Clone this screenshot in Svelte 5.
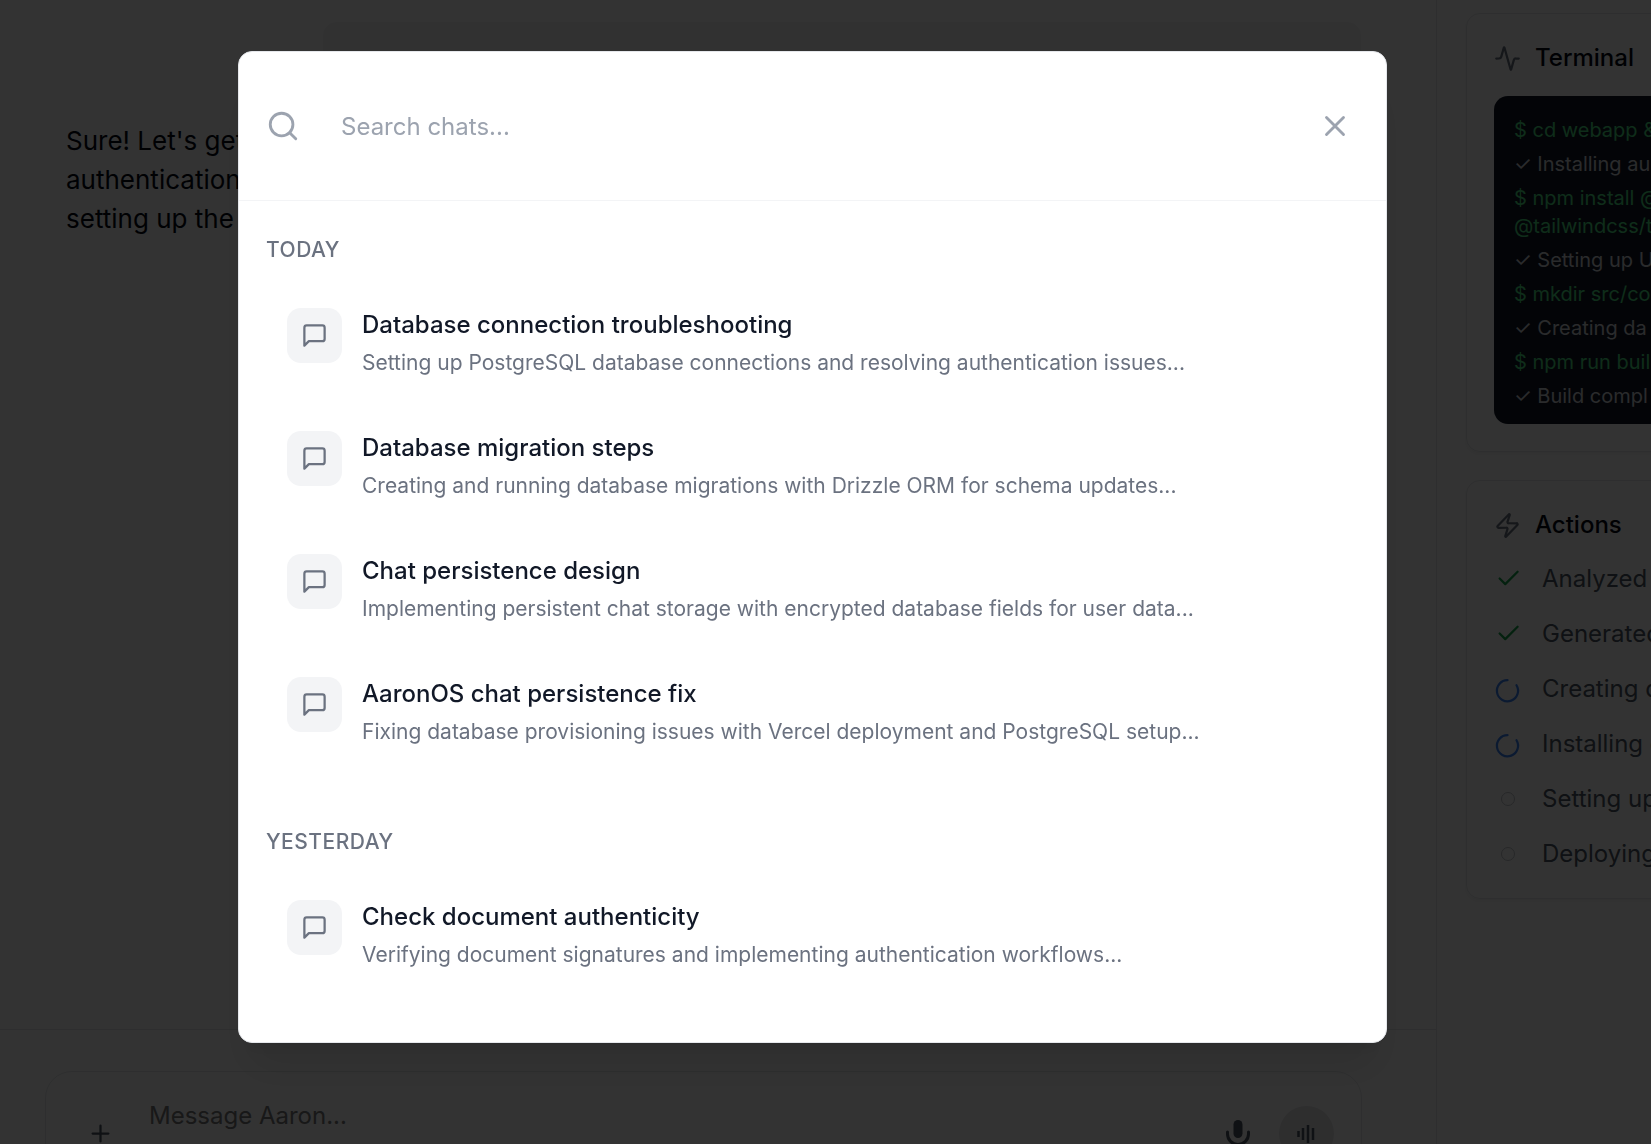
<script>
  const groups = [
    {
      label: 'TODAY',
      chats: [
        { title: 'Database connection troubleshooting', summary: 'Setting up PostgreSQL database connections and resolving authentication issues...' },
        { title: 'Database migration steps', summary: 'Creating and running database migrations with Drizzle ORM for schema updates...' },
        { title: 'Chat persistence design', summary: 'Implementing persistent chat storage with encrypted database fields for user data...' },
        { title: 'AaronOS chat persistence fix', summary: 'Fixing database provisioning issues with Vercel deployment and PostgreSQL setup...' }
      ]
    },
    {
      label: 'YESTERDAY',
      chats: [
        { title: 'Check document authenticity', summary: 'Verifying document signatures and implementing authentication workflows...' }
      ]
    }
  ];

  const log = [
    { kind: 'cmd', lines: ['$ cd webapp &'] },
    { kind: 'out', lines: ['✓ Installing au'] },
    { kind: 'cmd', lines: ['$ npm install @', '@tailwindcss/t'] },
    { kind: 'out', lines: ['✓ Setting up U'] },
    { kind: 'cmd', lines: ['$ mkdir src/co'] },
    { kind: 'out', lines: ['✓ Creating da'] },
    { kind: 'cmd', lines: ['$ npm run buil'] },
    { kind: 'out', lines: ['✓ Build compl'] }
  ];

  const actions = [
    { state: 'done', text: 'Analyzed' },
    { state: 'done', text: 'Generated' },
    { state: 'busy', text: 'Creating d' },
    { state: 'busy', text: 'Installing d' },
    { state: 'idle', text: 'Setting up' },
    { state: 'idle', text: 'Deploying' }
  ];

  let query = $state('');
</script>

<div class="app">
  <main class="chat">
    <div class="messages">
      <div class="bubble"></div>
      <p class="reply">Sure! Let's get<br />authentication<br />setting up the</p>
    </div>
    <footer class="composer">
      <div class="box">
        <button class="plain" aria-label="Add attachment">
          <svg class="s27" viewBox="0 0 24 24"><path d="M5 12h14M12 5v14" /></svg>
        </button>
        <input class="message" aria-label="Message" placeholder="Message Aaron..." />
        <button class="plain" aria-label="Dictate">
          <svg class="mic" viewBox="0 0 30 36">
            <rect class="solid" x="10.5" y="1" width="9" height="18" rx="4.5" />
            <path d="M4.500 13v2a10.500 10.500 0 0 0 21 0v-2M15 26v6" />
          </svg>
        </button>
        <button class="voice" aria-label="Voice mode">
          <svg class="wave" viewBox="0 0 20 20"><path d="M1.500 7v6M6 4v12M11 1v18M16 4v12" /></svg>
        </button>
      </div>
    </footer>
  </main>

  <aside class="side">
    <section class="card">
      <h2>
        <svg class="s27" viewBox="0 0 24 24"><path d="M22 12h-2.480a2 2 0 0 0-1.930 1.460l-2.350 8.360a.25.25 0 0 1-.48 0L9.240 2.180a.25.25 0 0 0-.48 0l-2.350 8.360A2 2 0 0 1 4.490 12H2" /></svg>
        Terminal
      </h2>
      <div class="terminal">
        {#each log as entry}
          <div class={entry.kind}>
            {#each entry.lines as line}<div>{line}</div>{/each}
          </div>
        {/each}
      </div>
    </section>
    <section class="card actions">
      <h2>
        <svg class="s27" viewBox="0 0 24 24"><path d="M4 14a1 1 0 0 1-.78-1.630l9.900-10.200a.5.5 0 0 1 .86.46l-1.920 6.020A1 1 0 0 0 13 10h7a1 1 0 0 1 .78 1.630l-9.900 10.200a.5.5 0 0 1-.86-.46l1.920-6.020A1 1 0 0 0 11 14z" /></svg>
        Actions
      </h2>
      <ul>
        {#each actions as a}
          <li>
            {#if a.state === 'done'}
              <svg class="s27 done" viewBox="0 0 24 24"><path d="M21 6 10 17l-5-5" /></svg>
            {:else if a.state === 'busy'}
              <svg class="s27 busy" viewBox="0 0 24 24"><path d="M12 4.600a9.400 9.400 0 1 0 8 4.500" /></svg>
            {:else}
              <span class="idle"></span>
            {/if}
            <span>{a.text}</span>
          </li>
        {/each}
      </ul>
    </section>
  </aside>
</div>

<div class="overlay">
  <div class="modal" role="dialog" aria-label="Search chats">
    <header>
      <svg class="s34" viewBox="0 0 24 24"><circle cx="11" cy="11" r="8" /><path d="m21 21-4.300-4.300" /></svg>
      <input class="search" aria-label="Search chats" placeholder="Search chats..." bind:value={query} />
      <button class="plain close" aria-label="Close">
        <svg class="s34" viewBox="0 0 24 24"><path d="M18 6 6 18M6 6l12 12" /></svg>
      </button>
    </header>
    <div class="results">
      {#each groups as group}
        <section>
          <h3>{group.label}</h3>
          <div class="rows">
            {#each group.chats as chat}
              <button class="row">
                <span class="tile">
                  <svg class="s27" viewBox="0 0 24 24"><path d="M21 15a2 2 0 0 1-2 2H7l-4 4V5a2 2 0 0 1 2-2h14a2 2 0 0 1 2 2z" /></svg>
                </span>
                <span class="text">
                  <span class="title">{chat.title}</span>
                  <span class="summary">{chat.summary}</span>
                </span>
              </button>
            {/each}
          </div>
        </section>
      {/each}
    </div>
  </div>
</div>

<style>
  :global(body) {
    margin: 0;
    overflow: hidden;
    background: #fff;
    font-family: Inter, 'Liberation Sans', sans-serif;
  }

  * { box-sizing: border-box; }

  svg {
    display: block;
    flex: none;
    overflow: visible;
    fill: none;
    stroke: currentColor;
    stroke-width: 2;
    stroke-linecap: round;
    stroke-linejoin: round;
  }

  button, input {
    border: 0;
    padding: 0;
    background: none;
    color: inherit;
    font: inherit;
    text-align: left;
    outline: none;
  }

  h2, h3, p, ul { margin: 0; padding: 0; }

  .s27 { width: 27px; height: 27px; }
  .s34 { width: 34px; height: 34px; }

  .app {
    display: flex;
    height: 100vh;
    overflow: hidden;
  }

  .chat {
    flex: 1;
    min-width: 0;
    display: flex;
    flex-direction: column;
    border-right: 1px solid #e5e7eb;
  }

  .messages {
    flex: 1;
    padding: 22px 75px 0 66px;
  }

  .bubble {
    height: 72px;
    margin: 0 0 27px 257px;
    border-radius: 14px;
    background: #f5f5f6;
  }

  .reply {
    color: #030712;
    font-size: 26px;
    line-height: 39px;
    white-space: nowrap;
  }

  .composer {
    height: 115px;
    flex: none;
    padding: 41px 74px 0 45px;
    border-top: 1px solid #e5e7eb;
  }

  .box {
    display: flex;
    align-items: flex-start;
    height: 130px;
    padding: 34px 27px 0 41px;
    border: 1px solid #e5e7eb;
    border-radius: 27px;
  }

  .box .plain { color: #4b5563; padding-top: 14px; }

  .message {
    flex: 1;
    min-width: 0;
    height: 34px;
    margin: -8px 27px 0 35px;
    font-size: 24px;
  }

  .message::placeholder { color: #78787a; opacity: 1; }

  .mic { width: 30px; height: 36px; stroke-width: 3; margin-top: -1px; }
  .solid { fill: currentColor; stroke: none; }

  .voice {
    display: grid;
    place-items: center;
    width: 55px;
    height: 55px;
    margin-left: 26px;
    border-radius: 50%;
    background: #e5e5e7;
    color: #4b5563;
  }

  .wave { width: 20px; height: 20px; stroke-width: 2.5; stroke-linecap: butt; }

  .side {
    width: 214px;
    flex: none;
    display: flex;
    flex-direction: column;
    align-items: flex-start;
    gap: 28px;
    padding: 13px 0 0 29px;
    overflow: hidden;
  }

  .card {
    width: 480px;
    padding: 27px;
    border: 1px solid #e5e7eb;
    border-radius: 14px;
    box-shadow: 0 2px 4px rgba(0, 0, 0, 0.06);
  }

  .card h2 {
    display: flex;
    align-items: center;
    gap: 14px;
    margin-bottom: 21px;
    color: #030712;
    font-size: 24px;
    font-weight: 500;
    line-height: 34px;
  }

  .card h2 svg { color: #6b7280; }

  .terminal {
    display: flex;
    flex-direction: column;
    gap: 6px;
    height: 328px;
    padding: 20px;
    border-radius: 14px;
    overflow: hidden;
    background: #111827;
    font-size: 20px;
    line-height: 28px;
    white-space: nowrap;
  }

  .cmd { color: #4ade80; }
  .out { color: #d1d5db; }

  .card.actions { padding-bottom: 17px; }
  .actions h2 { margin-bottom: 9px; }

  .actions li {
    display: flex;
    align-items: center;
    gap: 21px;
    height: 55px;
    color: #4b5563;
    font-size: 24px;
    line-height: 34px;
    white-space: nowrap;
  }

  .done { color: #16a34a; }
  .busy { color: #3b82f6; }

  .idle {
    width: 14px;
    height: 14px;
    margin: 0 6px 0 7px;
    border: 1px solid #bfc3ca;
    border-radius: 50%;
  }

  .overlay {
    position: fixed;
    inset: 0;
    display: flex;
    justify-content: center;
    align-items: flex-start;
    padding: 51px 26px 0 0;
    background: rgba(0, 0, 0, 0.8);
  }

  .modal {
    width: 100%;
    max-width: 1149px;
    border: 1px solid #e5e7eb;
    border-radius: 14px;
    background: #fff;
    box-shadow: 0 34px 43px -9px rgba(0, 0, 0, 0.1), 0 14px 17px -10px rgba(0, 0, 0, 0.1);
  }

  header {
    display: flex;
    align-items: center;
    height: 149px;
    padding: 0 34px 0 27px;
    border-bottom: 1px solid #f3f4f6;
    color: #9ca3af;
  }

  .search {
    flex: 1;
    min-width: 0;
    height: 55px;
    margin-left: 41px;
    font-size: 24px;
    color: #111827;
  }

  .search::placeholder { color: #9ca3af; opacity: 1; }

  .results {
    display: flex;
    flex-direction: column;
    gap: 59px;
    padding: 32px 27px 53px;
  }

  h3 {
    margin-bottom: 20px;
    color: #6b7280;
    font-size: 21px;
    font-weight: 500;
    line-height: 34px;
    letter-spacing: 0.5px;
  }

  .rows {
    display: flex;
    flex-direction: column;
    gap: 13px;
  }

  .row {
    display: flex;
    align-items: flex-start;
    gap: 20px;
    padding: 21px;
  }

  .tile {
    display: grid;
    place-items: center;
    width: 55px;
    height: 55px;
    flex: none;
    border-radius: 14px;
    background: #f3f4f6;
    color: #6b7280;
  }

  .text {
    display: flex;
    flex-direction: column;
    gap: 7px;
    min-width: 0;
  }

  .title {
    color: #111827;
    font-size: 24px;
    font-weight: 500;
    line-height: 34px;
  }

  .summary {
    color: #6b7280;
    font-size: 21px;
    line-height: 27px;
  }
</style>
